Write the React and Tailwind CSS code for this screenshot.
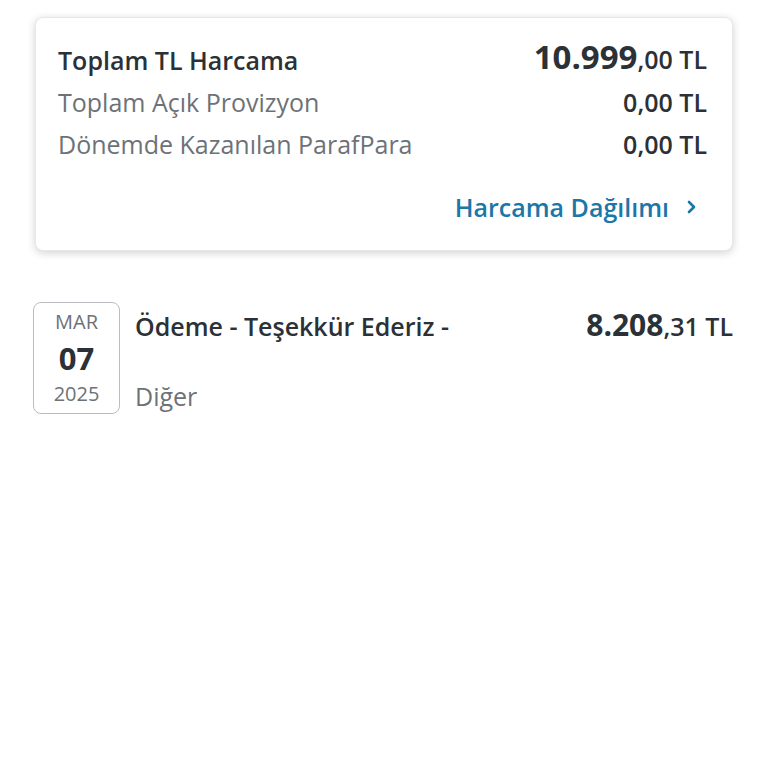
import React from 'react';

const font = { fontFamily: '"Open Sans", "Noto Sans", sans-serif' };

const Row = ({ label, value, strong }) => (
  <div className="flex h-[42px] items-center justify-between">
    <span className={strong ? 'text-[25px] font-semibold text-[#2b3136]' : 'text-[25px] text-[#6d7277]'}>{label}</span>
    {value}
  </div>
);

export default function App() {
  return (
    <div className="min-h-[768px] w-[768px] bg-white" style={font}>
      <div className="pt-[17px] px-[35px]">
        <div className="rounded-lg border border-[#e6e7e9] bg-white shadow-[0_2px_8px_rgba(0,0,0,0.18)] pl-[22px] pr-[25px] pt-[21px] pb-[23px]">
          <div className="flex flex-col leading-[34px]">
            <Row
              strong
              label="Toplam TL Harcama"
              value={
                <span className="whitespace-nowrap text-[#2b3136]">
                  <span className="text-[33px] font-bold">10.999</span>
                  <span className="text-[25px] font-semibold">,00 TL</span>
                </span>
              }
            />
            <Row label="Toplam Açık Provizyon" value={<span className="text-[25px] font-semibold text-[#2b3136]">0,00 TL</span>} />
            <Row label="Dönemde Kazanılan ParafPara" value={<span className="text-[25px] font-semibold text-[#2b3136]">0,00 TL</span>} />
          </div>
          <div className="mt-[22px] flex items-center justify-end gap-[16px] text-[#1b77a8]">
            <span className="text-[25px] font-semibold leading-[40px]">Harcama Dağılımı</span>
            <svg width="14" height="16" viewBox="0 0 14 16" className="mr-[8px]">
              <path d="M4 3 L9 8 L4 13" fill="none" stroke="currentColor" strokeWidth="2.6" strokeLinecap="round" strokeLinejoin="round" />
            </svg>
          </div>
        </div>
      </div>

      <div className="mt-[51px] flex px-[33px] pr-[35px]">
        <div className="flex h-[112px] w-[87px] flex-col items-center justify-center rounded-lg border border-[#b9bdc1]">
          <span className="text-[20px] leading-[36px] text-[#6d7277]">MAR</span>
          <span className="text-[31px] font-bold leading-[36px] text-[#2b3136]">07</span>
          <span className="text-[20px] leading-[36px] text-[#6d7277]">2025</span>
        </div>
        <div className="ml-[15px] flex flex-1 flex-col justify-between">
          <div className="flex items-baseline justify-between">
            <span className="text-[25px] font-semibold text-[#2b3136]">Ödeme - Teşekkür Ederiz -</span>
            <span className="whitespace-nowrap text-[#2b3136]">
              <span className="text-[30px] font-bold">8.208</span>
              <span className="text-[25px] font-semibold">,31 TL</span>
            </span>
          </div>
          <span className="text-[25px] leading-[36px] text-[#6d7277]">Diğer</span>
        </div>
      </div>
    </div>
  );
}
